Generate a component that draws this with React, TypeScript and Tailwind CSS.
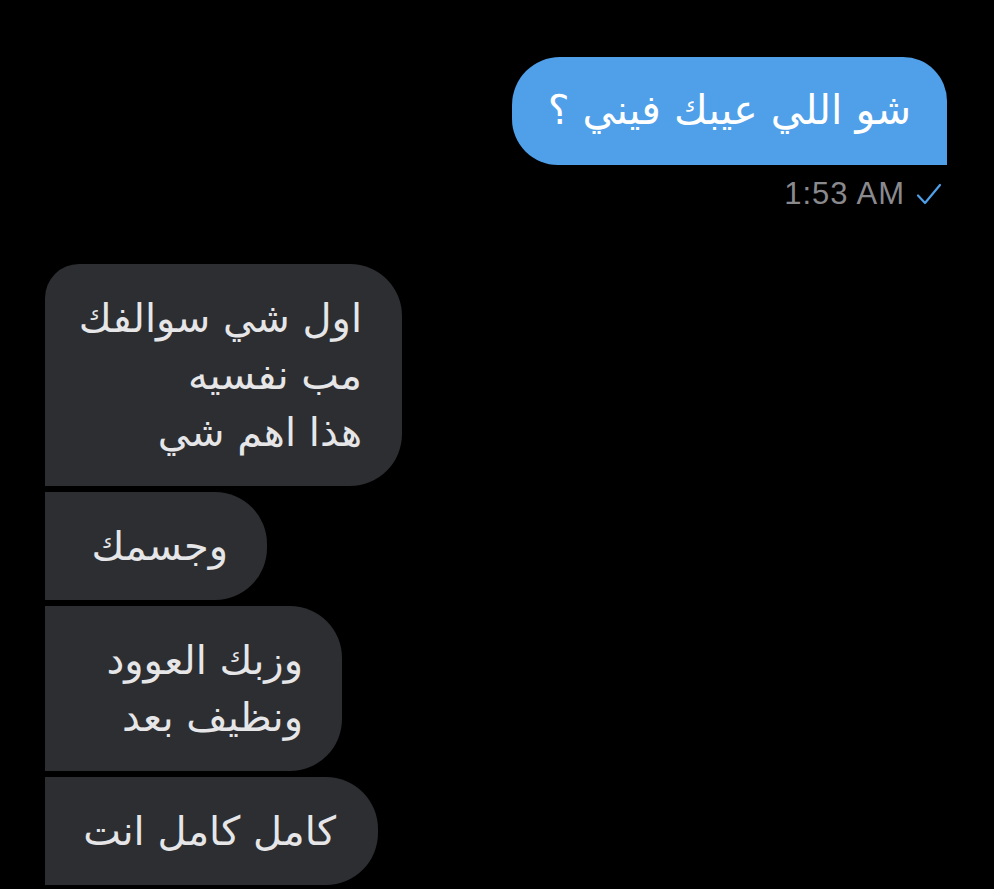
import React from "react";

const arabic = "font-['DejaVu_Sans','Noto_Sans',sans-serif]";

function Incoming({
  lines,
  first,
  height,
  width,
  padR,
}: {
  lines: string[];
  first?: boolean;
  height: number;
  width: number;
  padR: number;
}) {
  return (
    <div
      dir="rtl"
      className={`self-start flex flex-col justify-center bg-[#2c2e31] text-[#e6e6e8] text-[40px] leading-[57px] whitespace-nowrap rounded-r-[52px] ${
        first ? "rounded-tl-[34px]" : ""
      } ${arabic}`}
      style={{ height, width, paddingRight: padR }}
    >
      {lines.map((l, i) => (
        <div key={i}>{l}</div>
      ))}
    </div>
  );
}

export default function App() {
  return (
    <div className="w-[994px] h-[889px] bg-black overflow-hidden flex flex-col">
      <div className="flex flex-col items-end pt-[57px] pr-[47px]">
        <div
          dir="rtl"
          className={`w-[435px] h-[108px] flex items-center pr-[36px] whitespace-nowrap bg-[#4f9fe9] text-white text-[41px] rounded-tl-[48px] rounded-tr-[44px] rounded-bl-[46px] ${arabic}`}
        >
          شو اللي عيبك فيني ؟
        </div>
        <div className="mt-[12px] mr-[5px] flex items-center gap-[11px] h-[34px] font-['Liberation_Sans',Arial,sans-serif] text-[31px] tracking-[1px] text-[#8a8a8e]">
          <span>1:53 AM</span>
          <svg width="26" height="22" viewBox="0 0 26 22" fill="none">
            <path
              d="M2 12.5 L9 20 L24 2"
              stroke="#4f9fe9"
              strokeWidth="2.2"
              strokeLinecap="round"
              strokeLinejoin="round"
            />
          </svg>
        </div>
      </div>

      <div className="flex flex-col gap-[6px] pl-[45px] mt-[53px]">
        <Incoming
          first
          lines={["اول شي سوالفك", "مب نفسيه", "هذا اهم شي"]}
          height={222}
          width={357}
          padR={40}
        />
        <Incoming lines={["وجسمك"]} height={108} width={222} padR={39} />
        <Incoming
          lines={["وزبك العوود", "ونظيف بعد"]}
          height={165}
          width={297}
          padR={39}
        />
        <Incoming lines={["كامل كامل انت"]} height={108} width={333} padR={42} />
      </div>
    </div>
  );
}
